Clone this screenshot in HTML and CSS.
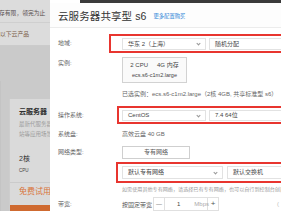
FILE: index.html
```html
<!DOCTYPE html>
<html lang="zh">
<head>
<meta charset="utf-8">
<link rel="stylesheet" href="styles.css">
</head>
<body>
<div class="bg">
  <div class="bg-row1">存有限，领完为止</div>
  <div class="bg-row2">以下云产品</div>
  <div class="bg-main">
    <div class="bg-side"></div>
    <div class="bg-card">
      <div class="c-title">云服务器</div>
      <div class="c-desc">最新代服务器</div>
      <div class="c-desc">站等应用场景</div>
      <div class="c-num">2核</div>
      <div class="c-unit">CPU</div>
      <div class="c-free">免费试用</div>
      <div class="c-bar"></div>
    </div>
  </div>
</div>
<div class="modal">
  <div class="topband"></div>
  <div class="head">
    <span class="title">云服务器共享型 s6</span>
    <span class="more">更多配置购买</span>
  </div>
  <div class="body">
    <div class="row r1">
      <div class="label">地域:</div>
      <div class="mark m1">
        <div class="sel w84">华东 2（上海）<span class="chev"></span></div>
        <div class="sel wide">随机分配</div>
      </div>
    </div>
    <div class="row r2">
      <div class="label">实例:</div>
      <div class="card">
        <div class="card-l1"><span>2 CPU</span><span>4G 内存</span></div>
        <div class="card-l2">ecs.s6-c1m2.large</div>
      </div>
    </div>
    <div class="row r3">
      <div class="label"></div>
      <div class="text">已选实例：ecs.s6-c1m2.large（2核 4GB, 共享标准型 s6）</div>
    </div>
    <div class="row r4">
      <div class="label">操作系统:</div>
      <div class="mark m2">
        <div class="sel w84 h11">CentOS<span class="chev"></span></div>
        <div class="sel wide h11">7.4 64位</div>
      </div>
    </div>
    <div class="row r5">
      <div class="label">系统盘:</div>
      <div class="text">高效云盘 40 GB</div>
    </div>
    <div class="row r6">
      <div class="label">网络类型:</div>
      <div><div class="btn">专有网络</div></div>
    </div>
    <div class="row r7">
      <div class="label"></div>
      <div class="mark m3">
        <div class="sel w101 h13">默认专有网络<span class="chev"></span></div>
        <div class="sel wide h13">默认交换机</div>
      </div>
    </div>
    <div class="row r-help">
      <div class="label"></div>
      <div class="help">如需使用其他专有网络，请选择已有专有网络，也可以自行到控制台创建。</div>
    </div>
    <div class="row r8">
      <div class="label">带宽:</div>
      <div class="bw">
        <span class="bw-type">按固定带宽</span>
        <div class="stepper">
          <span class="st-btn">—</span>
          <span class="st-mid"><span class="st-val">1</span><span class="st-unit">Mbps</span></span>
          <span class="st-btn plus">+</span>
        </div>
        <span class="bw-note">(</span>
      </div>
    </div>
  </div>
</div>
</body>
</html>
```

FILE: styles.css
```css
* { box-sizing: border-box; }
html, body { margin: 0; padding: 0; }
body {
  width: 281px;
  height: 211px;
  overflow: hidden;
  display: flex;
  font-family: "Liberation Sans", "Noto Sans CJK SC", sans-serif;
  background: #cbcbcb;
}

/* background page under overlay */
.bg {
  width: 50px;
  flex: none;
  overflow: hidden;
  display: flex;
  flex-direction: column;
  white-space: nowrap;
}
.bg-row1 {
  height: 23px;
  background: #dcdcdc;
  border-bottom: 1px solid #cfcfcf;
  font-size: 5.8px;
  line-height: 26px;
  color: #5a5050;
  margin-left: -1px;
}
.bg-row2 {
  height: 24px;
  background: #dcdcdc;
  border-bottom: 1px solid #cbcbcb;
  font-size: 5.8px;
  line-height: 22px;
  color: #7a5c48;
}
.bg-main {
  flex: 1;
  display: flex;
  background: #cacaca;
}
.bg-side {
  width: 12px;
  margin-top: 35px;
  background: #d5d5d5;
  border-right: 1px solid #c4c4c4;
}
.bg-card {
  margin-left: 8px;
  margin-top: 53px;
  width: 60px;
  background: #dadada;
  border-left: 1px solid #cdcdcd;
  padding-left: 9px;
  display: flex;
  flex-direction: column;
}
.c-title { font-size: 7px; font-weight: bold; color: #2e2e2e; margin-top: 8px; line-height: 9px; }
.c-desc { font-size: 5.5px; color: #9a9a9a; line-height: 10px; }
.c-desc:nth-of-type(2) { margin-top: 3px; }
.c-num { font-size: 7px; color: #333; margin-top: 15px; line-height: 9px; }
.c-unit { font-size: 4.5px; color: #444; margin-top: 5px; line-height: 6px; padding-bottom: 8px; border-bottom: 1px solid #cbcbcb; margin-left: -9px; padding-left: 9px; }
.c-free { font-size: 8px; color: #d9743a; margin-top: 4px; line-height: 10px; }
.c-bar { height: 6px; background: #cf6a30; margin-top: 8px; margin-left: -9px; }

/* modal */
.modal {
  flex: 1;
  min-width: 0;
  background: #fff;
  display: flex;
  flex-direction: column;
  overflow: hidden;
}
.topband {
  height: 3px;
  background: #3a3a3a;
  margin-left: 30px;
  flex: none;
}
.head {
  height: 25px;
  flex: none;
  display: flex;
  align-items: center;
  padding-left: 8px;
  border-bottom: 1px solid #ececec;
  background: #fdfdfd;
  white-space: nowrap;
}
.title { font-size: 10.5px; color: #333; letter-spacing: 0.1px; }
.more { font-size: 5.3px; color: #2f86d8; margin-left: 7px; margin-top: 2px; }

.body { padding-left: 8px; }
.row {
  display: grid;
  grid-template-columns: 64px 1fr;
  align-items: start;
  white-space: nowrap;
}
.label { font-size: 6px; color: #666; }
.text { font-size: 6px; color: #666; line-height: 12px; }

.mark {
  border: 2px solid #e8352f;
  border-right: none;
  display: flex;
}
.sel {
  position: relative;
  height: 12px;
  border: 1px solid #e2e2e2;
  font-size: 6px;
  color: #444;
  line-height: 10px;
  padding-left: 5px;
  flex: none;
}
.sel.h11 { height: 11px; line-height: 9px; }
.sel.h13 { height: 13px; line-height: 11px; }
.w84 { width: 84px; }
.w101 { width: 101px; }
.wide { width: 120px; }
.chev {
  position: absolute;
  right: 5px;
  top: 50%;
  width: 3px;
  height: 3px;
  border-right: 1px solid #999;
  border-bottom: 1px solid #999;
  transform: translateY(-70%) rotate(45deg);
}

.r1 { margin-top: 6px; }
.r1 .label { line-height: 19px; }
.m1 { margin-left: -13px; padding: 2px 0 1px 11px; gap: 3px; }

.r2 { margin-top: 4px; }
.r2 .label { line-height: 12px; }
.card {
  width: 65px;
  height: 26px;
  border: 1px solid #d2d2d2;
  background: #fafafa;
  display: flex;
  flex-direction: column;
  align-items: center;
  justify-content: center;
  gap: 2px;
  color: #444;
}
.card-l1 { font-size: 6px; line-height: 8px; display: flex; gap: 9px; }
.card-l2 { font-size: 5.5px; line-height: 8px; }

.r3 { margin-top: 5px; }

.r4 { margin-top: 6px; }
.r4 .label { line-height: 18px; }
.m2 { margin-left: -5px; padding: 2px 0 1px 3px; gap: 3px; }

.r5 { margin-top: 4px; }
.r5 .label { line-height: 12px; }

.r6 { margin-top: 6px; }
.r6 .label { line-height: 13px; }
.btn {
  width: 68px;
  height: 13px;
  border: 1px solid #cfcfcf;
  font-size: 6px;
  line-height: 11px;
  text-align: center;
  color: #555;
}

.r7 { margin-top: 3px; }
.m3 { margin-left: -6px; padding: 2px 0 2px 4px; gap: 4px; }

.r-help { margin-top: 1px; }
.help { font-size: 5.1px; color: #9a9a9a; line-height: 10px; }

.r8 { margin-top: 3px; }
.r8 .label { line-height: 14px; }
.bw { display: flex; align-items: center; height: 14px; }
.bw-type { font-size: 6px; color: #555; width: 31px; }
.stepper {
  display: flex;
  height: 14px;
  border: 1px solid #e0e0e0;
  color: #666;
}
.st-btn {
  width: 10px;
  font-size: 6px;
  line-height: 12px;
  text-align: center;
}
.st-mid {
  width: 44px;
  border-left: 1px solid #e0e0e0;
  border-right: 1px solid #e0e0e0;
  display: flex;
  align-items: center;
  font-size: 6px;
}
.st-val { margin-left: 12px; color: #444; }
.st-unit { margin-left: 14px; color: #aaa; }
.plus { font-size: 8px; color: #555; }
.bw-note { font-size: 6px; color: #bbb; margin-left: 58px; }
```
